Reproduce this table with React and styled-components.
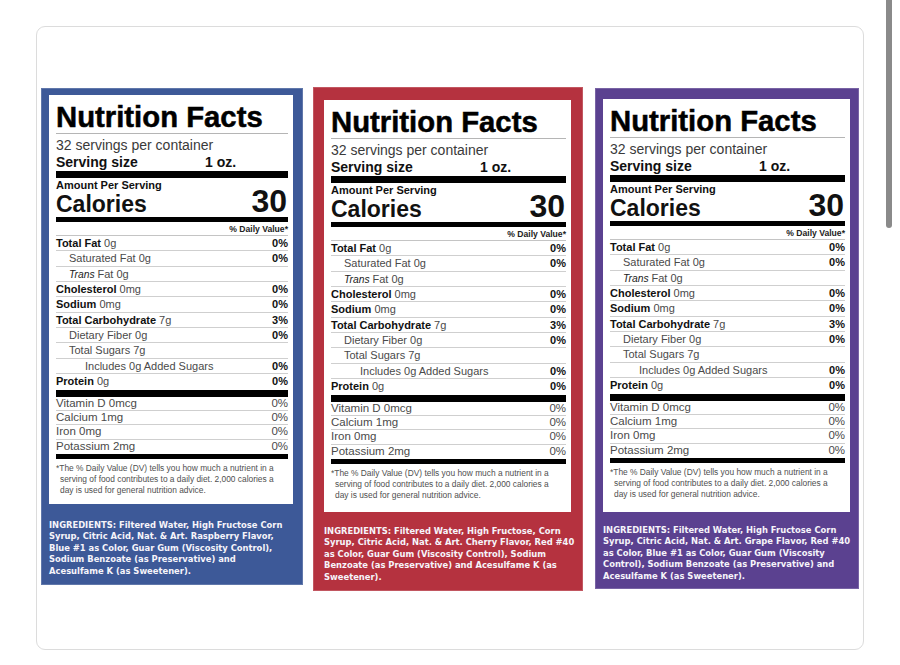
import React from "react";
import styled, { createGlobalStyle } from "styled-components";

const GlobalStyle = createGlobalStyle`
  html, body {
    margin: 0;
    padding: 0;
    background: #fff;
  }
  body {
    width: 900px;
    height: 665px;
    overflow: hidden;
    font-family: "Liberation Sans", Arial, sans-serif;
  }
`;

const facts = [
    { name: "Total Fat", amount: "0g", pct: "0%", strong: true },
    { name: "Saturated Fat 0g", pct: "0%", indent: 13 },
    { name: "Fat 0g", italic: "Trans", indent: 13 },
    { name: "Cholesterol", amount: "0mg", pct: "0%", strong: true },
    { name: "Sodium", amount: "0mg", pct: "0%", strong: true },
    { name: "Total Carbohydrate", amount: "7g", pct: "3%", strong: true },
    { name: "Dietary Fiber 0g", pct: "0%", indent: 13 },
    { name: "Total Sugars 7g", indent: 13 },
    { name: "Includes 0g Added Sugars", pct: "0%", indent: 29 },
    { name: "Protein", amount: "0g", pct: "0%", strong: true, last: true },
];

const minerals = [
    { name: "Vitamin D 0mcg", pct: "0%" },
    { name: "Calcium 1mg", pct: "0%" },
    { name: "Iron 0mg", pct: "0%" },
    { name: "Potassium 2mg", pct: "0%", last: true },
];

const note = [
    "*The % Daily Value (DV) tells you how much a nutrient in a",
    "serving of food contributes to a daily diet. 2,000 calories a",
    "day is used for general nutrition advice.",
];

const labels = [
    {
        flavor: "raspberry",
        color: "#3d5998",
        width: 262,
        gap: 10,
        shift: 0,
        pad: "7px 10px 0 8px",
        sheet: 409,
        ingPad: "15.5px 0 8px",
        lineHeight: 11.5,
        lines: [
            "INGREDIENTS: Filtered Water, High Fructose Corn",
            "Syrup, Citric Acid, Nat. & Art. Raspberry Flavor,",
            "Blue #1 as Color, Guar Gum (Viscosity Control),",
            "Sodium Benzoate (as Preservative) and",
            "Acesulfame K (as Sweetener).",
        ],
    },
    {
        flavor: "cherry",
        color: "#b5323f",
        width: 270,
        gap: 12,
        shift: -1,
        pad: "13px 12px 0 11px",
        sheet: 412,
        ingPad: "14px 0 8px",
        lineHeight: 11.4,
        lines: [
            "INGREDIENTS: Filtered Water, High Fructose, Corn",
            "Syrup, Citric Acid, Nat. & Art. Cherry Flavor, Red #40",
            "as Color, Guar Gum (Viscosity Control), Sodium",
            "Benzoate (as Preservative) and Acesulfame K (as",
            "Sweetener).",
        ],
    },
    {
        flavor: "grape",
        color: "#5b4190",
        width: 264,
        gap: 0,
        shift: 0,
        pad: "11px 9px 0 8px",
        sheet: 413,
        ingPad: "13px 0 7px",
        lineHeight: 11.4,
        lines: [
            "INGREDIENTS: Filtered Water, High Fructose Corn",
            "Syrup, Citric Acid, Nat. & Art. Grape Flavor, Red #40",
            "as Color, Blue #1 as Color, Guar Gum (Viscosity",
            "Control), Sodium Benzoate (as Preservative) and",
            "Acesulfame K (as Sweetener).",
        ],
    },
];

const Page = styled.div`
    position: relative;
    width: 900px;
    height: 665px;
    box-sizing: border-box;
    padding: 26px 0 0 36px;
`;

const Card = styled.div`
    display: flex;
    align-items: flex-start;
    width: 828px;
    height: 624px;
    box-sizing: border-box;
    border: 1px solid #dcdcdc;
    border-radius: 9px;
    padding: 61px 4px 0 4px;
`;

const Scrollbar = styled.div`
    position: absolute;
    top: 0;
    left: 886px;
    width: 6px;
    height: 228px;
    border-radius: 0 0 3px 3px;
    background: #8a8a8a;
`;

const Panel = styled.div`
    flex: none;
    width: ${(p) => p.$width}px;
    margin-right: ${(p) => p.$gap}px;
    margin-top: ${(p) => p.$shift}px;
    box-sizing: border-box;
    padding: ${(p) => p.$pad};
    background: ${(p) => p.$color};
    box-shadow: inset 0 0 0 1px rgba(255, 255, 255, 0.18);
`;

const Sheet = styled.div`
    height: ${(p) => p.$h}px;
    box-sizing: border-box;
    padding: 6px 5px 0 7px;
    background: #fff;
    color: #111;
`;

const Title = styled.div`
    font-size: 29.3px;
    font-weight: 700;
    line-height: 32px;
    white-space: nowrap;
    color: #000;
    -webkit-text-stroke: 0.5px #000;
    border-bottom: 1px solid #b5b5b5;
`;

const Servings = styled.div`
    margin-top: 3px;
    font-size: 14px;
    line-height: 17px;
    color: #3a3a3a;
`;

const ServingSize = styled.div`
    display: flex;
    font-size: 14px;
    font-weight: 700;
    line-height: 16px;

    span:first-child {
        width: 149px;
    }
`;

const Bar = styled.div`
    height: ${(p) => p.$h}px;
    margin-top: ${(p) => p.$mt}px;
    background: #000;
`;

const Amount = styled.div`
    margin-top: 1px;
    font-size: 11px;
    font-weight: 700;
    line-height: 12px;
`;

const CalRow = styled.div`
    display: flex;
    justify-content: space-between;
    align-items: baseline;
    line-height: 20px;
    font-weight: 700;
`;

const CalLabel = styled.span`
    font-size: 23px;
`;

const CalValue = styled.span`
    font-size: 32px;
    padding-right: 1px;
`;

const DvHead = styled.div`
    margin-top: 2px;
    font-size: 8.6px;
    font-weight: 700;
    line-height: 11px;
    text-align: right;
    color: #222;
    border-bottom: 1px solid #c4c4c4;
`;

const Row = styled.div`
    display: flex;
    justify-content: space-between;
    height: 14.33px;
    padding-left: ${(p) => p.$indent || 0}px;
    font-size: 11px;
    line-height: 14.33px;
    white-space: nowrap;
    border-bottom: ${(p) => (p.$last ? "none" : "1px solid #cfcfcf")};

    i {
        font-size: 10.3px;
        color: #222;
    }
`;

const Name = styled.span`
    color: #4a4a4a;

    b {
        color: #111;
    }
`;

const Pct = styled.span`
    font-weight: 700;
    color: #111;
`;

const MinorRow = styled.div`
    display: flex;
    justify-content: space-between;
    height: 13.3px;
    font-size: 11.5px;
    line-height: 13.3px;
    color: #4a4a4a;
    white-space: nowrap;
    border-bottom: ${(p) => (p.$last ? "none" : "1px solid #cfcfcf")};
`;

const Note = styled.div`
    padding: 4px 0 0 4px;
    font-size: 8.4px;
    line-height: 10.8px;
    color: #4f4f4f;
    white-space: nowrap;

    div:first-child {
        margin-left: -4px;
    }
`;

const Ingredients = styled.div`
    padding: ${(p) => p.$pad};
    font-family: "DejaVu Sans", "Liberation Sans", sans-serif;
    font-size: 8.4px;
    font-weight: 700;
    line-height: ${(p) => p.$lh}px;
    color: #f6f4fa;
    white-space: nowrap;
`;

const Label = ({ label }) => (
    <Panel
        $color={label.color}
        $width={label.width}
        $gap={label.gap}
        $shift={label.shift}
        $pad={label.pad}
    >
        <Sheet $h={label.sheet}>
            <Title>Nutrition Facts</Title>
            <Servings>32 servings per container</Servings>
            <ServingSize>
                <span>Serving size</span>
                <span>1 oz.</span>
            </ServingSize>
            <Bar $h={7} $mt={1} />
            <Amount>Amount Per Serving</Amount>
            <CalRow>
                <CalLabel>Calories</CalLabel>
                <CalValue>30</CalValue>
            </CalRow>
            <Bar $h={5} $mt={3} />
            <DvHead>% Daily Value*</DvHead>
            {facts.map((f) => (
                <Row key={f.name} $indent={f.indent} $last={f.last}>
                    <Name>
                        {f.italic && <i>{f.italic} </i>}
                        {f.strong ? <b>{f.name}</b> : f.name}
                        {f.amount && <> {f.amount}</>}
                    </Name>
                    {f.pct && <Pct>{f.pct}</Pct>}
                </Row>
            ))}
            <Bar $h={7} $mt={1.5} />
            {minerals.map((m) => (
                <MinorRow key={m.name} $last={m.last}>
                    <span>{m.name}</span>
                    <span>{m.pct}</span>
                </MinorRow>
            ))}
            <Bar $h={5} $mt={1} />
            <Note>
                {note.map((line) => (
                    <div key={line}>{line}</div>
                ))}
            </Note>
        </Sheet>
        <Ingredients $pad={label.ingPad} $lh={label.lineHeight}>
            {label.lines.map((line) => (
                <div key={line}>{line}</div>
            ))}
        </Ingredients>
    </Panel>
);

const App = () => (
    <>
        <GlobalStyle />
        <Page>
            <Card>
                {labels.map((label) => (
                    <Label key={label.flavor} label={label} />
                ))}
            </Card>
            <Scrollbar />
        </Page>
    </>
);

export default App;
